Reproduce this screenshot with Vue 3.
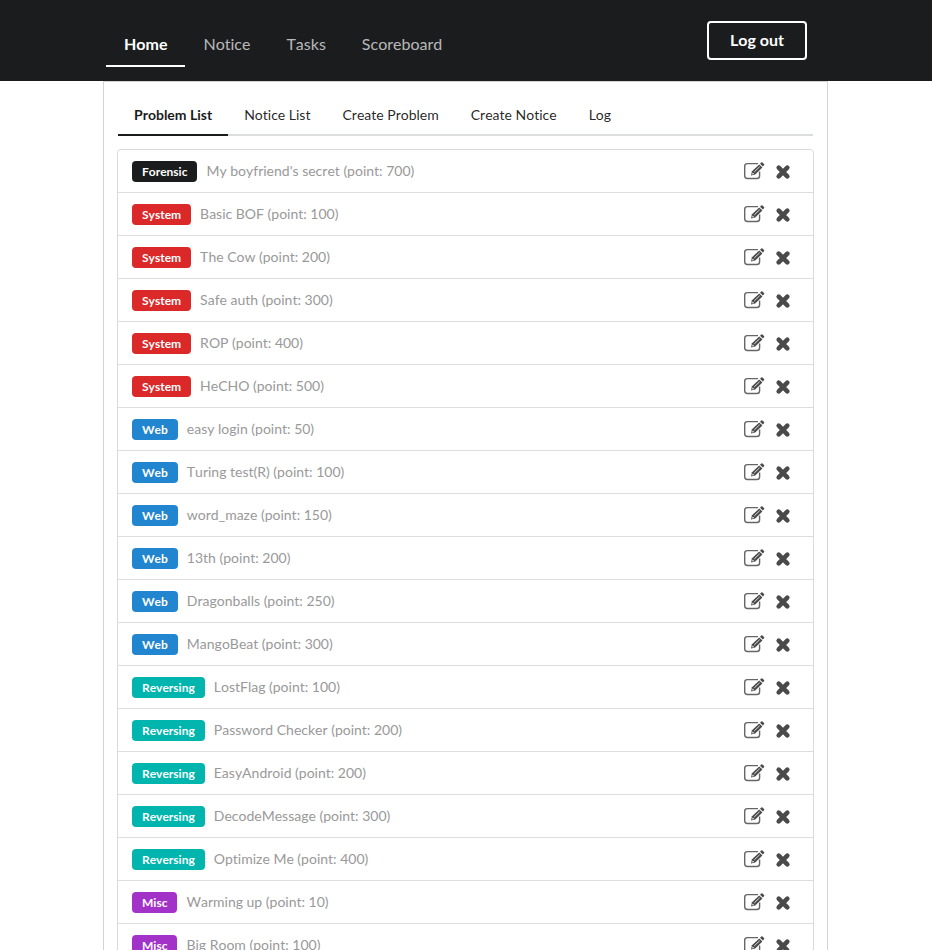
<script setup>
import { ref } from 'vue'

const pages = ['Home', 'Notice', 'Tasks', 'Scoreboard']
const tabs = ['Problem List', 'Notice List', 'Create Problem', 'Create Notice', 'Log']
const activeTab = ref('Problem List')

const problems = [
  ['Forensic', "My boyfriend's secret", 700],
  ['System', 'Basic BOF', 100],
  ['System', 'The Cow', 200],
  ['System', 'Safe auth', 300],
  ['System', 'ROP', 400],
  ['System', 'HeCHO', 500],
  ['Web', 'easy login', 50],
  ['Web', 'Turing test(R)', 100],
  ['Web', 'word_maze', 150],
  ['Web', '13th', 200],
  ['Web', 'Dragonballs', 250],
  ['Web', 'MangoBeat', 300],
  ['Reversing', 'LostFlag', 100],
  ['Reversing', 'Password Checker', 200],
  ['Reversing', 'EasyAndroid', 200],
  ['Reversing', 'DecodeMessage', 300],
  ['Reversing', 'Optimize Me', 400],
  ['Misc', 'Warming up', 10],
  ['Misc', 'Big Room', 100],
].map(([category, title, point]) => ({ category, title, point }))
</script>

<template>
  <div class="page">
    <header class="masthead">
      <div class="container bar">
        <nav class="menu">
          <a v-for="(page, i) in pages" :key="page" href="#" class="menu-item" :class="{ active: i === 0 }">{{ page }}</a>
        </nav>
        <button type="button" class="logout">Log out</button>
      </div>
    </header>

    <main class="container">
      <section class="panel">
        <nav class="tabs">
          <button
            v-for="tab in tabs"
            :key="tab"
            type="button"
            class="tab"
            :class="{ active: tab === activeTab }"
            @click="activeTab = tab"
          >{{ tab }}</button>
        </nav>

        <ul class="problems">
          <li v-for="problem in problems" :key="problem.title" class="problem">
            <span class="label" :class="problem.category.toLowerCase()">{{ problem.category }}</span>
            <span class="title">{{ problem.title }} (point: {{ problem.point }})</span>
            <button type="button" class="action" aria-label="Edit">
              <svg width="22" height="20" viewBox="0 0 22 20" fill="none">
                <path d="M15 2.6H4.4Q1.7 2.6 1.7 5.3V14.8Q1.7 17.5 4.4 17.5H13.8Q16.6 17.5 16.6 14.7V10.5" stroke="#666" stroke-width="1.4" />
                <path d="M8 14.6 9 10.2 16.2 3.4 19.4 6.6 12.2 13.4Z" fill="#4a4a4a" />
                <path d="M17 2.8 18.3 1.6Q18.9 1.1 19.5 1.6L21 3.1Q21.5 3.7 21 4.3L19.9 5.5Z" fill="#4a4a4a" />
                <path d="M11.2 11 16.7 5.7" stroke="#ddd" stroke-width="1" />
                <path d="M9.6 11.4 11.2 12.9 9.2 13.4Z" fill="#fff" />
              </svg>
            </button>
            <button type="button" class="action" aria-label="Delete">
              <svg width="16" height="16" viewBox="0 0 16 16">
                <path d="M3.7 3.7 12.3 12.3M12.3 3.7 3.7 12.3" stroke="#4a4a4a" stroke-width="4.6" stroke-linecap="round" />
              </svg>
            </button>
          </li>
        </ul>
      </section>
    </main>
  </div>
</template>

<style>
html {
  scrollbar-width: none;
}
body {
  margin: 0;
  background: #fff;
}
</style>

<style scoped>
.page {
  font-family: Lato, "Liberation Sans", sans-serif;
  font-size: 14px;
  line-height: 20px;
  font-kerning: none;
  font-variant-ligatures: none;
  color: rgba(0, 0, 0, 0.87);
}
button {
  font-family: inherit;
  font-kerning: inherit;
  font-variant-ligatures: inherit;
  margin: 0;
  background: none;
  cursor: pointer;
}
.container {
  box-sizing: border-box;
  max-width: 726px;
  margin: 0 auto;
  padding-right: 1px;
}
.masthead {
  background: #1b1c1d;
  padding: 14px 0;
}
.bar {
  display: flex;
  align-items: flex-end;
  justify-content: space-between;
  height: 53px;
  padding: 0 22px 0 3px;
}
.menu {
  display: flex;
}
.menu-item {
  padding: 10px 18px 11px;
  border-bottom: 2px solid transparent;
  font-size: 16px;
  line-height: 20px;
  color: rgba(255, 255, 255, 0.7);
  text-decoration: none;
}
.menu-item.active {
  border-color: #fff;
  color: #fff;
  font-weight: 700;
}
.logout {
  margin-bottom: 7px;
  padding: 8px 21px 9px;
  border: 2px solid #fff;
  border-radius: 4px;
  font-size: 16px;
  line-height: 18px;
  font-weight: 700;
  color: #fff;
}
.panel {
  padding: 14px 14px 28px;
  border: 1px solid #d4d4d5;
}
.tabs {
  display: flex;
  border-bottom: 2px solid #dcdddd;
}
.tab {
  margin-bottom: -2px;
  padding: 9px 16px;
  border: 0;
  border-bottom: 2px solid transparent;
  font-size: 14px;
  line-height: 20px;
  color: rgba(0, 0, 0, 0.87);
}
.tab.active {
  border-color: #1b1c1d;
  font-weight: 700;
  color: #1b1c1d;
}
.problems {
  list-style: none;
  margin: 13px -1px 0;
  padding: 0;
  border: 1px solid #d9dadb;
  border-radius: 4px;
}
.problem {
  display: flex;
  align-items: center;
  height: 42px;
  padding: 0 22px 0 14px;
}
.problem + .problem {
  border-top: 1px solid #dcddde;
}
.label {
  padding: 1px 10px 0;
  border-radius: 4px;
  font-size: 12px;
  line-height: 20px;
  font-weight: 700;
  color: #fff;
}
.forensic { background: #1b1c1d; }
.system { background: #db2828; }
.web { background: #2185d0; }
.reversing { background: #00b5ad; }
.misc { background: #a333c8; }
.title {
  flex: 1;
  margin-left: 9px;
  color: #999;
}
.action {
  display: flex;
  padding: 0;
  border: 0;
}
.action + .action {
  margin: 2px 0 0 10px;
}
</style>
